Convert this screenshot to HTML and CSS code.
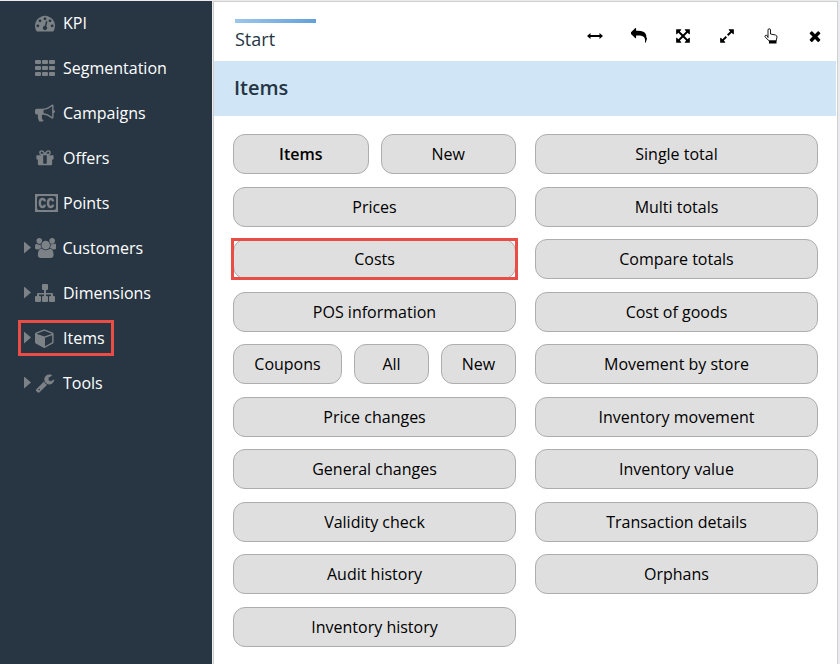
FILE: index.html
```html
<!DOCTYPE html>
<html lang="en">
<head>
<meta charset="utf-8">
<title>Items</title>
<link rel="stylesheet" href="styles.css">
</head>
<body>
<nav class="sidebar" aria-label="Main menu">
  <ul class="menu">
    <li><a class="menu-link" href="#"><span class="caret-slot"></span><svg class="menu-icon" viewBox="0 0 1792 1792"><path d="M384 1152q0-53-37.5-90.5t-90.5-37.5-90.5 37.5-37.5 90.5 37.5 90.5 90.5 37.5 90.5-37.5 37.5-90.5zm192-448q0-53-37.5-90.5t-90.5-37.5-90.5 37.5-37.5 90.5 37.5 90.5 90.5 37.5 90.5-37.5 37.5-90.5zm428 481l101-382q6-26-7.5-48.5t-38.5-29.5-48 6.5-30 39.5l-101 382q-60 5-107 43.5t-63 98.5q-20 77 20 146t117 89 146-20 89-117q16-60-6-117t-72-91zm660-33q0-53-37.5-90.5t-90.5-37.5-90.5 37.5-37.5 90.5 37.5 90.5 90.5 37.5 90.5-37.5 37.5-90.5zm-640-640q0-53-37.5-90.5t-90.5-37.5-90.5 37.5-37.5 90.5 37.5 90.5 90.5 37.5 90.5-37.5 37.5-90.5zm448 192q0-53-37.5-90.5t-90.5-37.5-90.5 37.5-37.5 90.5 37.5 90.5 90.5 37.5 90.5-37.5 37.5-90.5zm320 448q0 261-141 483-19 29-54 29h-1402q-35 0-54-29-141-221-141-483 0-182 71-348t191-286 286-191 348-71 348 71 286 191 191 286 71 348z"/></svg><span>KPI</span></a></li>
    <li><a class="menu-link" href="#"><span class="caret-slot"></span><svg class="menu-icon" viewBox="0 0 20 20"><path d="M1 2h4a1 1 0 0 1 1 1v2a1 1 0 0 1-1 1H1a1 1 0 0 1-1-1V3a1 1 0 0 1 1-1zm7 0h4a1 1 0 0 1 1 1v2a1 1 0 0 1-1 1H8a1 1 0 0 1-1-1V3a1 1 0 0 1 1-1zm7 0h4a1 1 0 0 1 1 1v2a1 1 0 0 1-1 1h-4a1 1 0 0 1-1-1V3a1 1 0 0 1 1-1zM1 8h4a1 1 0 0 1 1 1v2a1 1 0 0 1-1 1H1a1 1 0 0 1-1-1V9a1 1 0 0 1 1-1zm7 0h4a1 1 0 0 1 1 1v2a1 1 0 0 1-1 1H8a1 1 0 0 1-1-1V9a1 1 0 0 1 1-1zm7 0h4a1 1 0 0 1 1 1v2a1 1 0 0 1-1 1h-4a1 1 0 0 1-1-1V9a1 1 0 0 1 1-1zM1 14h4a1 1 0 0 1 1 1v2a1 1 0 0 1-1 1H1a1 1 0 0 1-1-1v-2a1 1 0 0 1 1-1zm7 0h4a1 1 0 0 1 1 1v2a1 1 0 0 1-1 1H8a1 1 0 0 1-1-1v-2a1 1 0 0 1 1-1zm7 0h4a1 1 0 0 1 1 1v2a1 1 0 0 1-1 1h-4a1 1 0 0 1-1-1v-2a1 1 0 0 1 1-1z"/></svg><span>Segmentation</span></a></li>
    <li><a class="menu-link" href="#"><span class="caret-slot"></span><svg class="menu-icon" viewBox="0 0 1792 1792"><path d="M1664 640q53 0 90.5 37.5t37.5 90.5-37.5 90.5-90.5 37.5v384q0 52-38 90t-90 38q-417-347-812-380-58 19-91 66t-31 100.5 40 92.5q-20 33-23 65.5t6 58 33.5 55 48 50 61.5 50.5q-29 58-111.5 83t-168.5 11.5-132-55.5q-7-23-29.5-87.5t-32-94.5-23-89-15-101 3.5-98.5 22-110.5h-122q-66 0-113-47t-47-113v-192q0-66 47-113t113-47h480q435 0 896-384 52 0 90 38t38 90v384zm-128 604v-954q-394 302-768 343v270q377 42 768 341z"/></svg><span>Campaigns</span></a></li>
    <li><a class="menu-link" href="#"><span class="caret-slot"></span><svg class="menu-icon" viewBox="0 0 1792 1792"><path d="M1056 1356v-716h-320v716q0 25 18 38.5t46 13.5h192q28 0 46-13.5t18-38.5zm-456-844h195l-126-161q-26-31-69-31-40 0-68 28t-28 68 28 68 68 28zm688-96q0-40-28-68t-68-28q-43 0-69 31l-125 161h194q40 0 68-28t28-68zm376 256v320q0 14-9 23t-23 9h-96v416q0 40-28 68t-68 28h-1088q-40 0-68-28t-28-68v-416h-96q-14 0-23-9t-9-23v-320q0-14 9-23t23-9h440q-93 0-158.5-65.5t-65.5-158.5 65.5-158.5 158.5-65.5q107 0 168 77l128 165 128-165q61-77 168-77 93 0 158.5 65.5t65.5 158.5-65.5 158.5-158.5 65.5h440q14 0 23 9t9 23z"/></svg><span>Offers</span></a></li>
    <li><a class="menu-link" href="#"><span class="caret-slot"></span><svg class="menu-icon wide-cc" viewBox="0 0 23 20"><path fill-rule="evenodd" d="M0 1h23v18H0zM4 3a2 2 0 0 0-2 2v10a2 2 0 0 0 2 2h15a2 2 0 0 0 2-2V5a2 2 0 0 0-2-2z"/><path class="cc-stroke" d="M9.900 8.400C9.600 5 4.800 4.900 4.800 10s4.800 5 5.100 1.600M18.100 8.400C17.800 5 13 4.900 13 10s4.800 5 5.100 1.600"/></svg><span>Points</span></a></li>
    <li><a class="menu-link" href="#"><span class="caret-slot"><span class="caret"></span></span><svg class="menu-icon wide-users" viewBox="0 0 1920 1792"><path d="M593 896q-162 5-265 128h-134q-82 0-138-40.500t-56-118.500q0-353 124-353 6 0 43.500 21t97.500 42.500 119 21.500q67 0 133-23-5 37-5 66 0 159 81 285zm1071 637q0 120-73 189.500t-194 69.500h-874q-121 0-194-69.500t-73-189.500q0-53 3.500-103.500t14-109 26.500-108.500 43-97.500 62-81 85.500-53.500 111.500-20q10 0 43 21.500t73 48 107 48 135 21.500 135-21.500 107-48 73-48 43-21.500q61 0 111.500 20t85.500 53.500 62 81 43 97.500 26.500 108.500 14 109 3.500 103.500zm-1024-1277q0 106-75 181t-181 75-181-75-75-181 75-181 181-75 181 75 75 181zm704 384q0 159-112.500 271.500t-271.500 112.500-271.500-112.500-112.500-271.500 112.500-271.500 271.500-112.500 271.500 112.500 112.500 271.500zm576 225q0 78-56 118.500t-138 40.500h-134q-103-123-265-128 81-126 81-285 0-29-5-66 66 23 133 23 59 0 119-21.500t97.500-42.500 43.500-21q124 0 124 353zm-128-609q0 106-75 181t-181 75-181-75-75-181 75-181 181-75 181 75 75 181z"/></svg><span>Customers</span></a></li>
    <li><a class="menu-link" href="#"><span class="caret-slot"><span class="caret"></span></span><svg class="menu-icon" viewBox="0 0 20 20"><path d="M8 1h4a1 1 0 0 1 1 1v4a1 1 0 0 1-1 1h-1v3h6a1 1 0 0 1 1 1v2h1a1 1 0 0 1 1 1v4a1 1 0 0 1-1 1h-4a1 1 0 0 1-1-1v-4a1 1 0 0 1 1-1h1v-1.500h-5V13h1a1 1 0 0 1 1 1v4a1 1 0 0 1-1 1H8a1 1 0 0 1-1-1v-4a1 1 0 0 1 1-1h1v-1.500H4V13h1a1 1 0 0 1 1 1v4a1 1 0 0 1-1 1H1a1 1 0 0 1-1-1v-4a1 1 0 0 1 1-1h1v-2a1 1 0 0 1 1-1h6V7H8a1 1 0 0 1-1-1V2a1 1 0 0 1 1-1z"/></svg><span>Dimensions</span></a></li>
    <li><a class="menu-link marked" href="#" aria-current="page"><span class="caret-slot"><span class="caret"></span></span><svg class="menu-icon" viewBox="0 0 1792 1792"><path d="M896 1629l640-349v-636l-640 233v752zm-64-865l698-254-698-254-698 254zm832-252v768q0 35-18 65t-49 47l-704 384q-28 16-61 16t-61-16l-704-384q-31-17-49-47t-18-65v-768q0-40 23-73t61-47l704-256q22-8 44-8t44 8l704 256q38 14 61 47t23 73z"/></svg><span>Items</span></a></li>
    <li><a class="menu-link" href="#"><span class="caret-slot"><span class="caret"></span></span><svg class="menu-icon" viewBox="0 0 1792 1792"><path d="M448 1472q0-26-19-45t-45-19-45 19-19 45 19 45 45 19 45-19 19-45zm644-420l-682 682q-37 37-90 37-52 0-91-37l-106-108q-38-36-38-90 0-53 38-91l681-681q39 98 114.500 173.500t173.500 114.500zm634-435q0 39-23 106-47 134-164.500 217.500t-258.500 83.500q-185 0-316.500-131.500t-131.500-316.500 131.500-316.500 316.500-131.500q58 0 121.500 16.500t107.500 46.500q16 11 16 28t-16 28l-293 169v224l193 107q5-3 79-48.500t135.500-81 70.500-35.500q15 0 23.500 10t8.500 25z"/></svg><span>Tools</span></a></li>
  </ul>
</nav>
<main class="panel">
  <header class="topbar">
    <a class="tab" href="#">Start</a>
    <div class="tools">
      <button class="tool" aria-label="Fit width"><svg viewBox="0 0 16 16"><path d="M0 8l3.500-3v2h9V5L16 8l-3.500 3V9h-9v2z"/></svg></button>
      <button class="tool" aria-label="Back"><svg viewBox="0 0 1792 1792"><path d="M1792 1120q0 166-127 451-3 7-10.500 24t-13.500 30-13 22q-12 17-28 17-15 0-23.500-10t-8.500-25q0-9 2.500-26.500t2.500-23.500q5-68 5-123 0-112-19.500-200.500t-54-153.500-89-112-117-78-146-49-169-25.500-188.500-7.500h-224v256q0 26-19 45t-45 19-45-19l-512-512q-19-19-19-45t19-45l512-512q19-19 45-19t45 19 19 45v256h224q713 0 875 403 53 134 53 333z"/></svg></button>
      <button class="tool" aria-label="Full screen"><svg viewBox="0 0 1792 1792"><path d="M1411 541l-355 355 355 355 144-144q29-31 70-14 39 17 39 59v448q0 26-19 45t-45 19h-448q-42 0-59-40-17-39 14-69l144-144-355-355-355 355 144 144q31 30 14 69-17 40-59 40h-448q-26 0-45-19t-19-45v-448q0-42 40-59 39-17 69 14l144 144 355-355-355-355-144 144q-19 19-45 19-12 0-24-5-40-17-40-59v-448q0-26 19-45t45-19h448q42 0 59 40 17 39-14 69l-144 144 355 355 355-355-144-144q-31-30-14-69 17-40 59-40h448q26 0 45 19t19 45v448q0 42-39 59-13 5-25 5-26 0-45-19z"/></svg></button>
      <button class="tool" aria-label="Expand"><svg viewBox="0 0 1792 1792"><path d="M883 1056q0 13-10 23l-332 332 144 144q19 19 19 45t-19 45-45 19h-448q-26 0-45-19t-19-45v-448q0-26 19-45t45-19 45 19l144 144 332-332q10-10 23-10t23 10l114 114q10 10 10 23zm781-864v448q0 26-19 45t-45 19-45-19l-144-144-332 332q-10 10-23 10t-23-10l-114-114q-10-10-10-23t10-23l332-332-144-144q-19-19-19-45t19-45 45-19h448q26 0 45 19t19 45z"/></svg></button>
      <button class="tool" aria-label="Touch mode"><svg viewBox="0 0 16 16"><path class="hand" d="M5 9.500V2a1.200 1.200 0 0 1 2.500 0v4l5 1q1.500.4 1.500 2c0 1.500-.9 2.500-.9 4H6.300L2.300 9.300C1.300 7.800 2.800 6.400 4.200 7.700z"/><path d="M6 12.500h7.500V15.500H6z"/></svg></button>
      <button class="tool" aria-label="Close"><svg viewBox="0 0 1792 1792"><path d="M1490 1322q0 40-28 68l-136 136q-28 28-68 28t-68-28l-294-294-294 294q-28 28-68 28t-68-28l-136-136q-28-28-28-68t28-68l294-294-294-294q-28-28-28-68t28-68l136-136q28-28 68-28t68 28l294 294 294-294q28-28 68-28t68 28l136 136q28 28 28 68t-28 68l-294 294 294 294q28 28 28 68z"/></svg></button>
    </div>
  </header>
  <h1 class="title">Items</h1>
  <div class="actions">
    <div class="row"><button class="btn primary">Items</button><button class="btn">New</button></div>
    <div class="row"><button class="btn">Prices</button></div>
    <div class="row marked"><button class="btn">Costs</button></div>
    <div class="row"><button class="btn">POS information</button></div>
    <div class="row"><button class="btn">Coupons</button><button class="btn short">All</button><button class="btn short">New</button></div>
    <div class="row"><button class="btn">Price changes</button></div>
    <div class="row"><button class="btn">General changes</button></div>
    <div class="row"><button class="btn">Validity check</button></div>
    <div class="row"><button class="btn">Audit history</button></div>
    <div class="row"><button class="btn">Inventory history</button></div>
    <div class="row"><button class="btn">Single total</button></div>
    <div class="row"><button class="btn">Multi totals</button></div>
    <div class="row"><button class="btn">Compare totals</button></div>
    <div class="row"><button class="btn">Cost of goods</button></div>
    <div class="row"><button class="btn">Movement by store</button></div>
    <div class="row"><button class="btn">Inventory movement</button></div>
    <div class="row"><button class="btn">Inventory value</button></div>
    <div class="row"><button class="btn">Transaction details</button></div>
    <div class="row"><button class="btn">Orphans</button></div>
  </div>
</main>
</body>
</html>
```
FILE: styles.css
```css
* {
  box-sizing: border-box;
}

body {
  display: flex;
  gap: 1px;
  min-height: 100vh;
  margin: 0;
  padding: 1px 2px 0 0;
  background: #e9ebee;
  color: #263543;
  font: 16px/24px "Open Sans", "Noto Sans", sans-serif;
}

a {
  color: inherit;
  text-decoration: none;
}

.sidebar {
  flex: 0 0 212px;
  background: #283644;
  color: #fff;
}

.menu {
  margin: 0;
  padding: 0 0 0 18px;
  list-style: none;
}

.menu li {
  display: flex;
  align-items: center;
  height: 45px;
  padding-bottom: 2px;
}

.menu-link {
  position: relative;
  display: flex;
  align-items: center;
  height: 36px;
  padding-right: 9px;
}

.caret-slot {
  width: 17px;
  padding-left: 6px;
}

.caret {
  display: block;
  width: 7px;
  height: 12px;
  background: #7d8286;
  clip-path: polygon(0 0, 100% 50%, 0 100%);
}

.menu-icon {
  height: 20px;
  min-width: 20px;
  margin-right: 8px;
  fill: #7d8286;
}

.wide-cc {
  margin-right: 5px;
}

.wide-users {
  margin-right: 6px;
}

.cc-stroke {
  fill: none;
  stroke: #7d8286;
  stroke-width: 2.4;
}

.marked {
  position: relative;
}

.marked::after {
  position: absolute;
  inset: 0;
  border: 3px solid #ea4c46;
  content: "";
  pointer-events: none;
}

.row.marked::after {
  inset: -1px -2px;
}

.panel {
  display: flex;
  flex: 1;
  flex-direction: column;
  border: 1px solid #cfcfcf;
  border-bottom: 0;
  background: #fff;
}

.topbar {
  display: flex;
  align-items: flex-start;
  justify-content: space-between;
  height: 59px;
  padding: 17px 14px 0 21px;
}

.tab {
  width: 81px;
  font-size: 18px;
}

.tab::before {
  display: block;
  height: 4px;
  margin-bottom: 4px;
  background: linear-gradient(90deg, #9cc6ec, #62a1da);
  content: "";
}

.tools {
  display: flex;
  gap: 28px;
  padding-top: 9px;
}

.tool {
  display: flex;
  padding: 0;
  border: 0;
  background: none;
}

.tool svg {
  width: 16px;
  height: 16px;
}

.hand {
  fill: none;
  stroke: #000;
  stroke-width: 0.9;
}

.title {
  margin: 0 1px 0 0;
  padding: 15px 20px 16px;
  background: #d0e6f6;
  font-size: 20px;
  font-weight: 600;
  line-height: 24px;
}

.actions {
  display: grid;
  flex: 1;
  grid-auto-columns: 1fr;
  grid-auto-flow: column;
  grid-template-rows: repeat(10, 40px);
  align-content: space-between;
  column-gap: 19px;
  padding: 18px 19px 17px;
}

.row {
  display: flex;
  gap: 12px;
}

.btn {
  flex: 1;
  padding: 0;
  border: 1px solid #adadad;
  border-radius: 12px;
  background: #dfdfdf;
  color: #000;
  font: inherit;
}

.primary {
  font-weight: 600;
}

.short {
  flex: 0 0 75px;
}
```
